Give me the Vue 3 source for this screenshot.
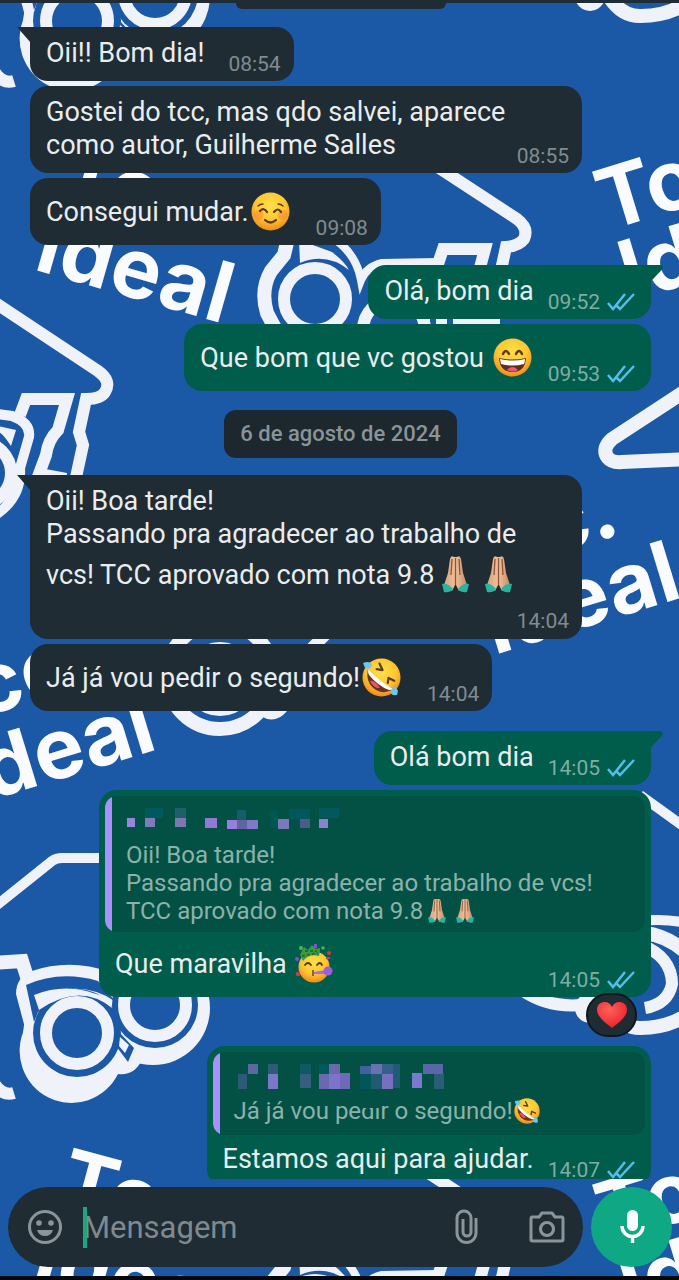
<script setup>
const messages = [
  { id: 1, side: 'in', tail: true, lines: [['Oii!! Bom dia!']], time: '08:54' },
  {
    id: 2, side: 'in', full: true, time: '08:55',
    lines: [['Gostei do tcc, mas qdo salvei, aparece'], ['como autor, Guilherme Salles']]
  },
  { id: 3, side: 'in', lines: [['Consegui mudar.', { emoji: 'blush' }]], time: '09:08' },
  { id: 4, side: 'out', tail: true, first: true, lines: [['Olá, bom dia']], time: '09:52' },
  { id: 5, side: 'out', lines: [['Que bom que vc gostou ', { emoji: 'grin' }]], time: '09:53' },
  { id: 6, date: '6 de agosto de 2024' },
  {
    id: 7, side: 'in', tail: true, full: true, below: true, time: '14:04',
    lines: [
      ['Oii! Boa tarde!'],
      ['Passando pra agradecer ao trabalho de'],
      ['vcs! TCC aprovado com nota 9.8', { emoji: 'pray' }, { emoji: 'pray' }]
    ]
  },
  { id: 8, side: 'in', lines: [['Já já vou pedir o segundo!', { emoji: 'rofl' }]], time: '14:04' },
  { id: 9, side: 'out', tail: true, first: true, lines: [['Olá bom dia']], time: '14:05' },
  {
    id: 10, side: 'out', full: true, heart: true, time: '14:05',
    quote: {
      name: 'a',
      lines: [
        ['Oii! Boa tarde!'],
        ['Passando pra agradecer ao trabalho de vcs!'],
        ['TCC aprovado com nota 9.8', { emoji: 'pray' }, { emoji: 'pray' }]
      ]
    },
    lines: [['Que maravilha ', { emoji: 'party' }]]
  },
  {
    id: 11, side: 'out', time: '14:07',
    quote: { name: 'b', smudge: true, lines: [['Já já vou pedir o segundo!', { emoji: 'rofl' }]] },
    lines: [['Estamos aqui para ajudar.']]
  }
]

// Pixelated sender names: x, y, width, height, colour
const mosaics = {
  a: [
    [1, 11, 8, 9, '#9a85dc'], [19, 1, 18, 10, '#00595c'], [19, 11, 10, 9, '#7d7cb8'],
    [49, 1, 11, 10, '#1d6068'], [49, 11, 11, 9, '#7b78b4'], [79, 11, 12, 10, '#9179d4'],
    [101, 13, 10, 9, '#9a7de0'], [111, 3, 9, 10, '#175c66'], [111, 13, 10, 9, '#6264a0'],
    [121, 13, 11, 9, '#8078c8'], [144, 3, 8, 18, '#005650'], [152, 12, 11, 10, '#7b78bc'],
    [163, 2, 21, 10, '#00585e'], [174, 12, 10, 9, '#4a5c8c'], [193, 1, 20, 10, '#00595f'],
    [193, 12, 9, 9, '#8a80d0']
  ],
  b: [
    [14, 1, 10, 10, '#5a69a0'], [4, 11, 9, 15, '#2e5a78'], [34, 1, 10, 10, '#2c5d78'],
    [34, 11, 10, 15, '#7b78c8'], [66, 1, 11, 10, '#0f5a62'], [66, 11, 11, 14, '#345f80'],
    [85, 1, 10, 10, '#005a5c'], [85, 11, 10, 15, '#6a68b0'], [95, 1, 11, 10, '#6a69b0'],
    [95, 11, 11, 15, '#7c74c8'], [106, 10, 10, 16, '#7068b8'], [126, 3, 11, 8, '#45609a'],
    [126, 11, 11, 15, '#00565a'], [137, 1, 11, 10, '#6a70b0'], [137, 11, 11, 15, '#1f5c70'],
    [148, 1, 11, 10, '#35608a'], [148, 11, 11, 15, '#7570c0'], [159, 1, 7, 24, '#205c78'],
    [178, 10, 10, 15, '#7a78d0'], [189, 1, 20, 10, '#5a66a8'], [200, 11, 10, 15, '#2a5d78']
  ]
}
const tiles = [-1012, 0, 1012]

// Wallpaper lettering: text, x, y, angle
const words = [
  ['Tcc', 55, 198, 15],
  ['Ideal', 32, 269, 16],
  ['Tc', 607, 231, -17],
  ['Id', 630, 302, -17],
  ['Tcc.', 454, 585, -17],
  ['Ideal', 494, 655, -17],
  ['Tcc', -66, 732, -17],
  ['Ideal', -31, 807, -17],
  ['Tcc', 55, 1206, 15],
  ['Idea', 30, 1280, 16],
  ['Tc', 607, 1244, -17],
  ['Id', 630, 1316, -17]
]
</script>

<template>
  <main class="screen">
    <svg class="wallpaper" viewBox="0 0 679 1280" preserveAspectRatio="xMidYMid slice" aria-hidden="true">
      <g class="word">
        <text v-for="(w, i) in words" :key="i" :transform="`translate(${w[1]} ${w[2]}) rotate(${w[3]})`">{{ w[0] }}</text>
      </g>
      <g v-for="dy in tiles" :key="dy" :transform="`translate(0 ${dy})`">
        <!-- house and truck, centre -->
        <g class="line">
          <path d="M430 162 L517 219 Q529 228 524 239 Q519 246 506 247 L501 270" />
          <path d="M290 230 L284 255 L271 271 Q260 290 267 313 L276 330" stroke-width="14" />
          <circle cx="315" cy="299" r="31" />
          <path d="M394 330 m-31 0 a31 31 0 0 1 62 0" />
          <path d="M330 236 Q356 252 361 280 Q366 267 382 263 L436 262" stroke-width="8" />
          <path d="M436 270 L443 249 L485 249 L478 275" />
          <path d="M419 321 H430 M436 321 H447 M453 321 H500" />
        </g>
        <path class="solid" d="M299 240 L332 252 Q345 262 349 270 Q326 252 300 263Z" />
        <!-- house and truck, left -->
        <g class="line">
          <path d="M-6 302 L98 371 Q112 381 105 392 Q101 399 86 399 L79 432 L83 445 L75 482" />
          <path d="M20 415 L26 399 L67 399 L58 430 Q48 440 46 455 L39 474 L66 479" />
          <path d="M-10 413 L12 416 Q31 423 29 437 L20 468 Q22 498 -6 516" stroke-width="10" />
          <circle cx="-20" cy="473" r="31" />
        </g>
        <path class="solid" d="M-2 426 L16 430 L11 446 Q2 432 -2 432Z" />
        <!-- roof, right -->
        <g class="line">
          <path d="M690 388 L612 439 Q601 449 608 458 Q612 463 622 462 L690 459" stroke-width="14" />
        </g>
        <!-- wheel, lower centre -->
        <g class="line">
          <circle cx="220" cy="676" r="53" stroke-width="14" />
          <circle cx="220" cy="679" r="31" />
          <path d="M262 650 L264 711 Q275 718 284 705 L300 660 L340 620" />
        </g>
        <!-- house and truck, lower left -->
        <g class="line">
          <path d="M-8 909 L52 861 Q56 858 62 858 L150 858" stroke-width="10" />
        </g>
        <circle class="outer" cx="153" cy="1008" r="57" />
        <path class="outer" d="M25 1028 L16 994 Q16 977 32 971 Q70 958 110 972 L140 1020 L142 1060 Q134 1076 118 1074 A50 50 0 0 1 25 1028Z" />
        <circle class="outer" cx="77" cy="1036" r="54" />
        <circle class="inner" cx="155" cy="1005" r="43" />
        <circle class="inner" cx="77" cy="1033" r="44" />
        <path class="inner" d="M26 985 Q60 970 98 981 L116 1002 Q92 985 62 990 L38 1012 L34 1022Z" />
        <path class="solid" d="M34 995 Q72 980 110 1000 L112 1008 Q80 982 39 1010Z" />
        <g class="line">
          <circle cx="155" cy="1005" r="31" />
          <circle cx="77" cy="1033" r="31" />
          <path d="M-8 963 L22 961 L28 980" stroke-width="14" />
          <path d="M-12 1070 Q-2 1098 14 1093" />
        </g>
        <path class="inner" d="M113 1042 L119 1032 L134 1048 L128 1062Z" />
        <path class="solid" d="M119 1046 L120 1037 L129 1045 L125 1053Z" />
        <!-- house and truck, right -->
        <g class="line">
          <path d="M640 795 L690 831" stroke-width="10" />
          <path d="M640 921 Q668 918 690 924" stroke-width="10" />
          <path d="M645 933 Q684 938 712 985 Q690 1028 640 1028 Q622 1028 610 1010" stroke-width="14" />
          <path d="M640 944 Q672 957 672 984 Q668 1004 645 1008" />
          <path d="M522 990 Q550 1010 590 1004" />
          <circle cx="590" cy="1008" r="9" />
        </g>
      </g>
    </svg>

    <svg class="defs" aria-hidden="true">
      <defs>
        <radialGradient id="face" cx="50%" cy="35%" r="65%">
          <stop offset="0" stop-color="#ffe04a" />
          <stop offset=".6" stop-color="#fdc630" />
          <stop offset="1" stop-color="#ee8a1d" />
        </radialGradient>
        <linearGradient id="skin" x1="0" x2="1">
          <stop offset="0" stop-color="#d9a27c" />
          <stop offset=".5" stop-color="#efc09a" />
          <stop offset="1" stop-color="#c68a66" />
        </linearGradient>
        <radialGradient id="love" cx="40%" cy="30%" r="75%">
          <stop offset="0" stop-color="#ff6058" />
          <stop offset="1" stop-color="#e8202c" />
        </radialGradient>
      </defs>
      <symbol id="blush" viewBox="0 0 39 39">
        <circle cx="19.500" cy="19.500" r="19" fill="url(#face)" />
        <g fill="#fb8a3a" opacity=".55"><circle cx="7.500" cy="23" r="5" /><circle cx="31.500" cy="23" r="5" /></g>
        <g fill="none" stroke="#5a3a1c" stroke-linecap="round">
          <path d="M9 19 Q13 15 16 20 M23 20 Q27 15 30 20" stroke-width="2.200" />
          <path d="M7 14 Q9 12 12 12 M27 12 Q30 12 32 14" stroke-width="1.400" />
          <path d="M14 28 Q19.500 33 25 28" stroke-width="2.200" />
        </g>
      </symbol>
      <symbol id="grin" viewBox="0 0 39 39">
        <circle cx="19.500" cy="19.500" r="19" fill="url(#face)" />
        <path d="M10 16 Q13 10 16 16 M23 16 Q26 10 29 16" fill="none" stroke="#5a3a1c" stroke-width="2.400" stroke-linecap="round" />
        <path d="M6 20 Q19.500 23 33 20 Q32 34 19.500 34 Q7 34 6 20Z" fill="#5c2f1b" />
        <path d="M7 21 Q19.500 24 32 21 Q32 24 31 26 Q19.500 29 8 26Z" fill="#fff" />
        <path d="M14 32 Q19.500 26 25 32 Q19.500 35 14 32Z" fill="#f2567c" />
      </symbol>
      <symbol id="rofl" viewBox="0 0 39 39">
        <circle cx="19.500" cy="19.500" r="19" fill="url(#face)" />
        <path d="M6 11 Q3 25 14 32 Q23 37 31 31 Q15 24 6 11Z" fill="#6b321d" />
        <path d="M6 11 Q6 15 7 17 Q16 28 27 32 Q30 32 31 31 Q17 23 6 11Z" fill="#fff" />
        <path d="M8 23 Q12 21 18 30 Q12 31 8 23Z" fill="#f0526a" />
        <path d="M16 6 L20 12 L14 12 M33 21 L27 19 L27 24" fill="none" stroke="#5a3a1c" stroke-width="2.200" stroke-linecap="round" stroke-linejoin="round" transform="rotate(8 20 16)" />
        <path d="M1 5 Q8 2 10 7 Q8 12 3 10Z M31 28 Q38 31 35 37 Q28 38 29 33Z" fill="#6cc6ee" />
      </symbol>
      <symbol id="pray" viewBox="0 0 39 39">
        <path d="M18 2 Q15 0 14 4 L12 18 L8 30 L16 36 L19 30 L20 30 L23 36 L31 30 L27 18 L25 4 Q24 0 21 2Z" fill="url(#skin)" />
        <path d="M19.500 3 V30 M16 4 L15 20 M23 4 L24 20" stroke="#8b5639" stroke-width="1.300" fill="none" />
        <path d="M6 29 Q12 28 17 34 Q14 38 8 37Z M33 29 Q27 28 22 34 Q25 38 31 37Z" fill="#25b5a0" />
      </symbol>
      <symbol id="party" viewBox="0 0 39 39">
        <circle cx="19" cy="23" r="15.500" fill="url(#face)" />
        <path d="M5 11 L9 3 L13 6 L17 1 L21 5 L25 4 Q25 8 24 12 Q14 9 8 17Z" fill="#3f9b3a" />
        <path d="M10 7 L22 7 M7 12 L23 9" stroke="#226f39" stroke-width="2" stroke-dasharray="3 2" />
        <path d="M10 21 Q13 17 16 21 M22 21 Q25 17 27 21" fill="none" stroke="#5a3a1c" stroke-width="1.800" stroke-linecap="round" />
        <path d="M19 28 L31 26 L31 30 L19 30Z" fill="#a66bea" />
        <circle cx="33" cy="27" r="4.500" fill="#9a5fe0" />
        <path d="M18 26 V32" stroke="#6b4423" stroke-width="1.500" />
        <g fill="#e0324a"><circle cx="34" cy="9" r="2" /><circle cx="3" cy="30" r="2.200" /><path d="M31 13 h4 v2 h-4z" /></g>
        <g fill="#7a52d8"><circle cx="2" cy="15" r="2" /><path d="M19 0 h3 v4 h-3z" /></g>
        <g fill="#4eb548"><circle cx="28" cy="4" r="1.800" /><circle cx="6" cy="4" r="2" /></g>
      </symbol>
    </svg>

    <div class="topbar"></div>

    <section class="thread">
      <div class="chip-edge"></div>
      <template v-for="m in messages" :key="m.id">
        <div v-if="m.date" class="date">{{ m.date }}</div>
        <article
          v-else
          class="bubble"
          :class="[m.side, { tail: m.tail, first: m.first, full: m.full, below: m.below, heart: m.heart }]"
        >
          <blockquote v-if="m.quote" class="quote">
            <svg class="mosaic" viewBox="0 0 216 28" aria-hidden="true">
              <rect
                v-for="(r, i) in mosaics[m.quote.name]" :key="i"
                :x="r[0]" :y="r[1]" :width="r[2]" :height="r[3]" :fill="r[4]"
              />
            </svg>
            <p v-for="(line, i) in m.quote.lines" :key="i" class="quote-line">
              <template v-for="(part, j) in line" :key="j">
                <svg v-if="part.emoji" class="emoji small"><use :href="'#' + part.emoji" /></svg>
                <template v-else>{{ part }}</template>
              </template>
            </p>
            <span v-if="m.quote.smudge" class="smudge"></span>
          </blockquote>
          <div class="row">
            <div class="text">
              <p v-for="(line, i) in m.lines" :key="i">
                <template v-for="(part, j) in line" :key="j">
                  <svg v-if="part.emoji" class="emoji"><use :href="'#' + part.emoji" /></svg>
                  <template v-else>{{ part }}</template>
                </template>
              </p>
            </div>
            <div class="meta">
              <time>{{ m.time }}</time>
              <svg v-if="m.side === 'out'" class="ticks" viewBox="0 0 28 20" aria-label="Lida">
                <path d="M1 10 L6 16 L18 1 M10 13 L13 16 L27 1" />
              </svg>
            </div>
          </div>
          <span v-if="m.heart" class="reaction">
            <svg viewBox="0 0 30 27"><path d="M15 26 C10 22 0 15 0 8 C0 2 4 0 8 0 C11 0 14 2 15 5 C16 2 19 0 22 0 C26 0 30 2 30 8 C30 15 20 22 15 26Z" fill="url(#love)" /></svg>
          </span>
        </article>
      </template>
    </section>

    <form class="composer" @submit.prevent>
      <div class="field">
        <button type="button" class="icon" aria-label="Emoji">
          <svg width="36" height="36" viewBox="0 0 36 36">
            <circle cx="18" cy="18" r="15.500" fill="none" stroke="#8a9499" stroke-width="3" />
            <circle cx="12" cy="14" r="2.800" fill="#8a9499" /><circle cx="24" cy="14" r="2.800" fill="#8a9499" />
            <path d="M10 21 H26 Q24 27 18 27 Q12 27 10 21Z" fill="#8a9499" />
          </svg>
        </button>
        <label class="entry">
          <span class="caret"></span>
          <input type="text" placeholder="Mensagem" aria-label="Mensagem" />
        </label>
        <button type="button" class="icon clip" aria-label="Anexar">
          <svg width="24" height="36" viewBox="0 0 24 36">
            <path d="M21 9 V24 A9 9 0 0 1 2 24 V9 A7 7 0 0 1 16 9 V23 A4 4 0 0 1 8 23 V10" fill="none" stroke="#8a9499" stroke-width="3" />
          </svg>
        </button>
        <button type="button" class="icon" aria-label="Câmera">
          <svg width="36" height="34" viewBox="0 0 36 34">
            <path d="M3 7 H10 L13 3 H23 L26 7 H33 Q34 7 34 9 V30 Q34 31 32 31 H4 Q2 31 2 30 V9 Q2 7 3 7Z" fill="none" stroke="#8a9499" stroke-width="3" stroke-linejoin="round" />
            <circle cx="18" cy="19" r="6.500" fill="none" stroke="#8a9499" stroke-width="3.200" />
          </svg>
        </button>
      </div>
      <button type="button" class="mic" aria-label="Gravar áudio">
        <svg width="26" height="34" viewBox="0 0 26 34">
          <rect x="8" y="0" width="11" height="21" rx="5.500" fill="#fff" />
          <path d="M3 16 A10.500 10.500 0 0 0 24 16 M13.500 26 V33" fill="none" stroke="#fff" stroke-width="3.400" />
        </svg>
      </button>
    </form>
    <div class="bottombar"></div>
  </main>
</template>

<style>
html,
body,
#app {
  height: 100%;
  margin: 0;
}
</style>

<style scoped>
.screen {
  position: relative;
  display: flex;
  flex-direction: column;
  height: 100%;
  overflow: hidden;
  background: #1b59a6;
  color: #e9edef;
  font-family: Roboto, "Liberation Sans", sans-serif;
}
.wallpaper {
  position: absolute;
  inset: 0;
  width: 100%;
  height: 100%;
}
.word {
  fill: #fafbff;
  font: 700 84px Inter, "Open Sans", sans-serif;
}
.line {
  fill: none;
  stroke: #f0f2fa;
  stroke-width: 12px;
}
.solid,
.outer {
  fill: #f0f2fa;
}
.inner {
  fill: #1b59a6;
}
.defs {
  position: absolute;
  width: 0;
  height: 0;
}
.topbar {
  position: relative;
  flex: none;
  height: 3px;
  background: #202c33;
}
.thread {
  position: relative;
  flex: 1;
  min-height: 0;
  overflow: hidden;
  display: flex;
  flex-direction: column;
  gap: 5px;
  padding: 0 28px 0 30px;
}
.thread > * {
  flex: none;
}
.chip-edge {
  align-self: center;
  width: 210px;
  height: 6px;
  margin-bottom: 13px;
  border-radius: 0 0 12px 12px;
  background: #202c33;
}
.date {
  align-self: center;
  margin: 14px 0 12px;
  padding: 0 16px;
  border-radius: 12px;
  background: #1c272e;
  color: #8a9499;
  font-size: 22px;
  font-weight: 500;
  line-height: 48px;
}
.bubble {
  position: relative;
  max-width: 100%;
  border-radius: 18px;
}
.in {
  align-self: flex-start;
  background: #202c33;
}
.out {
  align-self: flex-end;
  background: #005c4b;
}
.first {
  margin-top: 15px;
}
.full {
  width: calc(100% - 69px);
}
.tail::before {
  content: "";
  position: absolute;
  top: 0;
  width: 14px;
  height: 16px;
  background: inherit;
}
.in.tail {
  border-top-left-radius: 0;
}
.in.tail::before {
  left: -13px;
  clip-path: polygon(0 0, 100% 0, 100% 100%);
}
.out.tail {
  border-top-right-radius: 0;
}
.out.tail::before {
  right: -12px;
  clip-path: polygon(0 0, 90% 0, 100% 12%, 95% 26%, 16% 100%, 0 100%);
}
.row {
  display: flex;
  align-items: flex-end;
  justify-content: space-between;
  padding-left: 16px;
}
.in .row {
  gap: 24px;
  padding-right: 13px;
}
.full .row {
  gap: 8px;
}
.out .row {
  gap: 14px;
  padding-right: 16px;
}
.in.below .row {
  flex-direction: column;
  align-items: stretch;
  gap: 0;
}
.text {
  padding: 10px 0 11px;
  font-size: 27px;
  line-height: 33px;
}
.below .text {
  padding-bottom: 12px;
}
.quote + .row .text {
  padding: 8px 0 11px;
}
p {
  margin: 0;
  white-space: pre;
}
.emoji {
  width: 39px;
  height: 39px;
  margin: 4px 2px 3px;
  vertical-align: -13px;
}
.emoji.small {
  width: 26px;
  height: 26px;
  margin: 0 1px;
  vertical-align: -5px;
}
.meta {
  display: flex;
  align-items: center;
  justify-content: flex-end;
  gap: 7px;
  margin-bottom: 4px;
  color: #808b91;
  font-size: 21px;
  line-height: 25px;
}
.below .meta {
  margin-bottom: 5px;
}
.out .meta {
  color: #7fada4;
}
.ticks {
  width: 28px;
  height: 20px;
  fill: none;
  stroke: #53bdeb;
  stroke-width: 2.5px;
}
.quote {
  position: relative;
  box-sizing: border-box;
  min-height: 83px;
  margin: 0 6px;
  padding: 11px 14px 7px 21px;
  border-radius: 12px;
  background: linear-gradient(90deg, #a791fb 7px, #025144 7px);
  color: #8cb2ab;
  font-size: 24px;
}
.bubble:has(.quote) {
  padding-top: 6px;
}
.quote-line {
  height: 28px;
  line-height: 28px;
}
.mosaic {
  display: block;
  width: 216px;
  height: 28px;
  margin-bottom: 6px;
}
.smudge {
  position: absolute;
  left: 146px;
  top: 45px;
  width: 23px;
  height: 11px;
  background: #025144;
}
.heart {
  margin-bottom: 44px;
}
.reaction {
  position: absolute;
  right: 14px;
  bottom: -40px;
  display: grid;
  place-items: center;
  width: 47px;
  height: 40px;
  border: 2px solid #0e171c;
  border-radius: 22px;
  background: #202c33;
}
.reaction svg {
  width: 30px;
  height: 27px;
}
.composer {
  position: relative;
  flex: none;
  display: flex;
  gap: 8px;
  margin: 8px 7px 9px 8px;
}
button {
  padding: 0;
  border: 0;
  background: none;
}
.field {
  flex: 1;
  display: flex;
  align-items: center;
  min-width: 0;
  height: 80px;
  padding: 0 18px 0 19px;
  border-radius: 40px;
  background: #202c33;
}
.icon {
  display: grid;
  place-items: center;
  flex: none;
}
.clip {
  margin-right: 50px;
}
.entry {
  position: relative;
  flex: 1;
  min-width: 0;
  margin-left: 20px;
}
.caret {
  position: absolute;
  left: 0;
  top: 0;
  width: 4px;
  height: 41px;
  background: #1ba784;
}
input {
  display: block;
  width: 100%;
  height: 41px;
  box-sizing: border-box;
  padding: 0;
  border: 0;
  outline: 0;
  background: none;
  color: #e9edef;
  font: 31px Roboto, "Liberation Sans", sans-serif;
}
input::placeholder {
  color: #7f8a90;
  opacity: 1;
}
.mic {
  display: grid;
  place-items: center;
  flex: none;
  width: 81px;
  height: 80px;
  border-radius: 50%;
  background: #0fa884;
}
.bottombar {
  position: relative;
  flex: none;
  height: 4px;
  background: #05090c;
}
</style>
